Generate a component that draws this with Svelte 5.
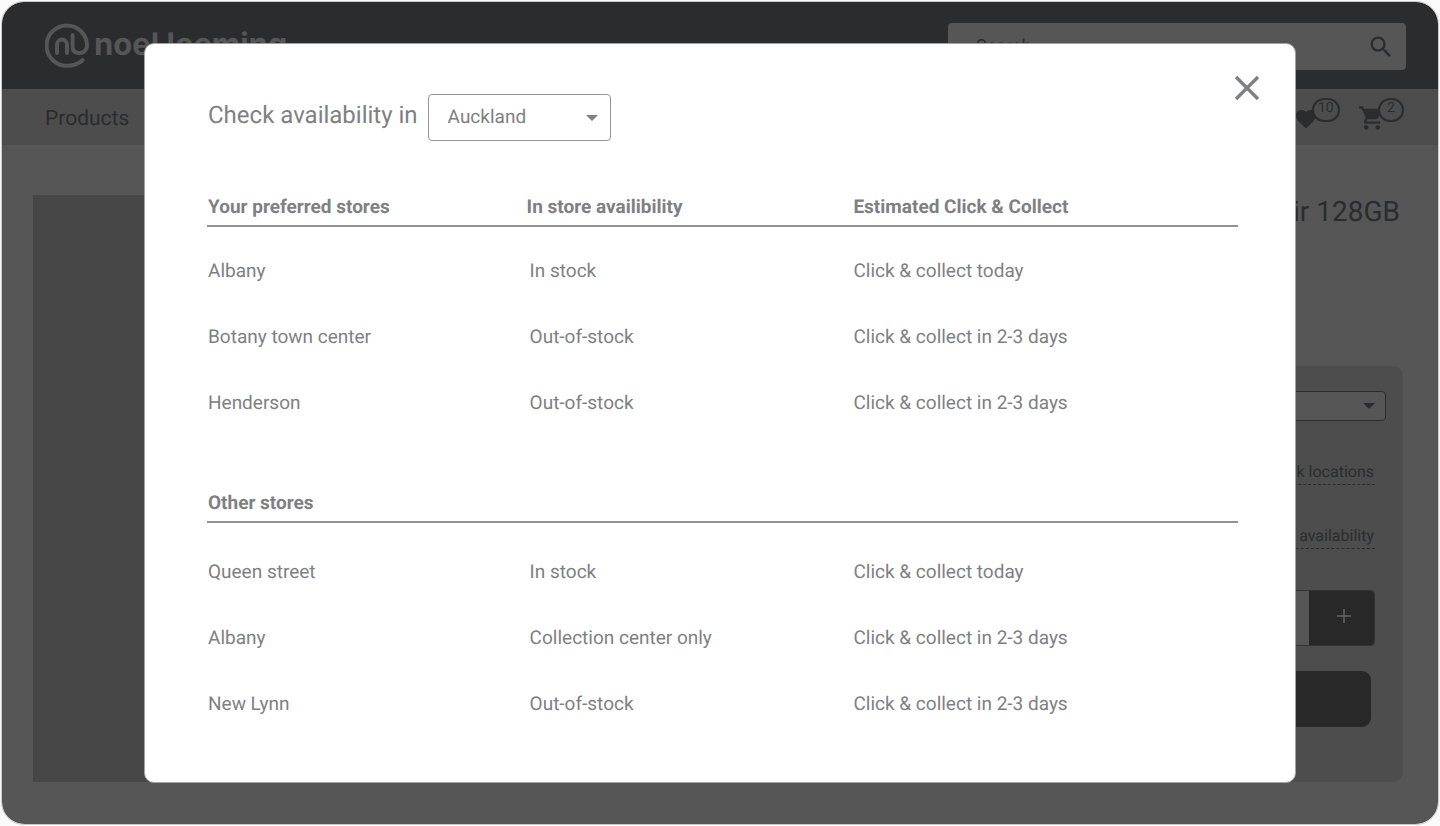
<script>
  const groups = [
    {
      headings: ['Your preferred stores', 'In store availibility', 'Estimated Click & Collect'],
      rows: [
        ['Albany', 'In stock', 'Click & collect today'],
        ['Botany town center', 'Out-of-stock', 'Click & collect in 2-3 days'],
        ['Henderson', 'Out-of-stock', 'Click & collect in 2-3 days']
      ]
    },
    {
      headings: ['Other stores', '', ''],
      rows: [
        ['Queen street', 'In stock', 'Click & collect today'],
        ['Albany', 'Collection center only', 'Click & collect in 2-3 days'],
        ['New Lynn', 'Out-of-stock', 'Click & collect in 2-3 days']
      ]
    }
  ];
  let quantity = $state(1);
  let open = $state(true);
</script>

<div class="frame">
  <header class="top">
    <a class="logo" href="#home" aria-label="noel leeming">
      <svg width="44" height="46" viewBox="0 0 44 46" fill="none" stroke="currentColor" stroke-width="4" stroke-linecap="round" stroke-linejoin="round">
        <path d="M37.5 37.2C33.5 41 28.5 42.8 22 42.8A20.2 20.2 0 1 1 42 22.5C42 27 38.5 30 34.5 30C30 30 27.6 28 27.6 24V12" />
        <path d="M12 30V21.6a5 5 0 0 1 10 0V30" />
      </svg>
      <span>noel leeming</span>
    </a>
    <label class="search">
      <input type="text" placeholder="Search" aria-label="Search" />
      <svg width="28" height="28" viewBox="0 0 24 24" fill="currentColor"><path d="M15.5 14h-.79l-.28-.27A6.47 6.47 0 0 0 16 9.5 6.5 6.5 0 1 0 9.5 16c1.61 0 3.09-.59 4.23-1.57l.27.28v.79l5 4.99L20.49 19l-4.99-5zm-6 0C7.01 14 5 11.99 5 9.5S7.01 5 9.5 5 14 7.01 14 9.5 11.99 14 9.5 14z" /></svg>
    </label>
  </header>

  <nav>
    <a href="#products">Products</a>
    <div class="shortcuts">
      <a class="shortcut wish" href="#wishlist" aria-label="Wish list">
        <svg width="24" height="24" viewBox="0 0 24 24" fill="currentColor"><path d="M12 21.35l-1.45-1.32C5.4 15.36 2 12.28 2 8.5 2 5.42 4.42 3 7.5 3c1.74 0 3.41.81 4.5 2.09C13.09 3.81 14.76 3 16.5 3 19.58 3 22 5.42 22 8.5c0 3.78-3.4 6.86-8.55 11.54L12 21.35z" /></svg>
        <span class="badge">10</span>
      </a>
      <a class="shortcut cart" href="#cart" aria-label="Cart">
        <svg width="28" height="28" viewBox="0 0 24 24" fill="currentColor"><path d="M7 18c-1.1 0-1.99.9-1.99 2S5.9 22 7 22s2-.9 2-2-.9-2-2-2zM1 2v2h2l3.6 7.59-1.35 2.45c-.16.28-.25.61-.25.96 0 1.1.9 2 2 2h12v-2H7.42c-.14 0-.25-.11-.25-.25l.03-.12.9-1.63h7.45c.75 0 1.41-.41 1.75-1.03l3.58-6.49A1 1 0 0 0 20 4H5.21l-.94-2H1zm16 16c-1.1 0-1.99.9-1.99 2s.89 2 1.99 2 2-.9 2-2-.9-2-2-2z" /></svg>
        <span class="badge">2</span>
      </a>
    </div>
  </nav>

  <main>
    <div class="photo"></div>
    <section class="product">
      <h1>Air 128GB</h1>
      <div class="buy">
        <div class="option">
          <select aria-label="Option"><option></option></select>
          <svg width="12" height="6" viewBox="0 0 12 6" fill="currentColor"><path d="M0 0h12L6 6z" /></svg>
        </div>
        <div class="actions">
          <a href="#locations">Check locations</a>
          <a href="#availability">Check availability</a>
          <div class="stepper">
            <input type="text" aria-label="Quantity" bind:value={quantity} />
            <button type="button" aria-label="Add one" onclick={() => quantity++}>
              <svg width="14" height="14" viewBox="0 0 14 14" stroke="currentColor" stroke-width="2"><path d="M7 0v14M0 7h14" /></svg>
            </button>
          </div>
          <button class="add" type="button" aria-label="Add to cart"></button>
        </div>
      </div>
    </section>
  </main>

  {#if open}
    <div class="modal" role="dialog" aria-modal="true" aria-labelledby="region-label">
      <div class="modal-head">
        <div class="region">
          <label id="region-label" for="region">Check availability in</label>
          <div class="region-select">
            <select id="region"><option>Auckland</option></select>
            <svg width="12" height="6" viewBox="0 0 12 6" fill="currentColor"><path d="M0 0h12L6 6z" /></svg>
          </div>
        </div>
        <button class="close" type="button" aria-label="Close" onclick={() => (open = false)}>
          <svg width="26" height="26" viewBox="0 0 26 26" stroke="currentColor" stroke-width="3.4"><path d="M2 2l22 22M24 2L2 24" /></svg>
        </button>
      </div>
      <div class="modal-body">
        {#each groups as group}
          <table>
            <thead>
              <tr>
                {#each group.headings as heading}
                  <th scope="col">{heading}</th>
                {/each}
              </tr>
            </thead>
            <tbody>
              {#each group.rows as row}
                <tr>
                  {#each row as cell}
                    <td>{cell}</td>
                  {/each}
                </tr>
              {/each}
            </tbody>
          </table>
        {/each}
      </div>
    </div>
  {/if}
</div>

<style>
  :global(body) {
    background: #fafafa;
    font-family: Roboto, sans-serif;
    text-rendering: geometricPrecision;
  }
  :global(#app) {
    display: flow-root;
  }
  * {
    box-sizing: border-box;
  }
  svg {
    display: block;
    flex: none;
  }
  a {
    color: inherit;
    text-decoration: none;
  }
  button,
  input,
  select {
    margin: 0;
    padding: 0;
    border: 0;
    color: inherit;
    font: inherit;
    text-rendering: inherit;
    background: none;
    appearance: none;
  }
  .frame {
    position: relative;
    margin: 2px;
    border-radius: 22px;
    overflow: hidden;
    color: #2b2c2e;
    background: #565656;
    outline: 1px solid #c8cbcd;
  }
  .top {
    display: flex;
    align-items: center;
    justify-content: space-between;
    height: 87px;
    padding: 2px 32px 0 43px;
    background: #2b2c2e;
  }
  .logo {
    display: flex;
    align-items: center;
    gap: 5px;
    padding-bottom: 2px;
    color: #565656;
    font: 700 31px/36px Inter, sans-serif;
  }
  .logo span {
    padding-bottom: 2px;
  }
  .search {
    display: flex;
    flex: 0 1 458px;
    align-items: center;
    height: 47px;
    padding: 0 11px 0 28px;
    border-radius: 4px;
    background: #565656;
  }
  .search input {
    flex: 1;
    min-width: 0;
    font-size: 18px;
  }
  .search input::placeholder {
    color: #2b2c2e;
  }
  nav {
    display: flex;
    align-items: center;
    justify-content: space-between;
    height: 56px;
    padding: 3px 52px 0 43px;
    font-size: 21px;
    background: #4d4d4d;
  }
  .shortcuts {
    display: flex;
    align-items: center;
    gap: 40px;
  }
  .shortcut {
    position: relative;
  }
  .cart {
    padding-bottom: 2px;
  }
  .badge {
    position: absolute;
    top: -9px;
    left: 18px;
    min-width: 26px;
    height: 24px;
    padding: 0 4px;
    border: 2px solid;
    border-radius: 12px;
    font-size: 14px;
    line-height: 17px;
    text-align: center;
    background: #4d4d4d;
  }
  .cart .badge {
    top: -6px;
    left: 20px;
  }
  main {
    display: grid;
    grid-template-columns: 3fr 2fr;
    gap: 40px;
    padding: 50px 35px 42px 31px;
  }
  .photo {
    background: #464646;
  }
  h1 {
    margin: 0 3px 137px 0;
    font-size: 28px;
    font-weight: 400;
    line-height: 34px;
    text-align: right;
  }
  .buy {
    padding: 25px 17px 55px;
    border-radius: 10px;
    background: #4d4d4d;
  }
  .option {
    display: flex;
    align-items: center;
    height: 30px;
    padding-right: 10px;
    border: 1px solid;
    border-radius: 4px;
    background: #565656;
  }
  .option select {
    flex: 1;
  }
  .actions {
    display: flex;
    flex-direction: column;
    align-items: flex-end;
    gap: 41px;
    padding: 41px 11px 0 0;
  }
  .actions a {
    padding: 0 1px 2px;
    border-bottom: 1px dashed;
    font-size: 16px;
    line-height: 20px;
  }
  .stepper {
    display: flex;
    width: 240px;
    height: 56px;
    border: 1px solid #333333;
    border-radius: 4px;
    background: #565656;
    overflow: hidden;
  }
  .stepper input {
    flex: 1;
    min-width: 0;
    text-align: center;
  }
  .stepper button {
    display: grid;
    place-items: center;
    width: 65px;
    padding: 0 0 4px 4px;
    color: #565656;
    background: #282828;
  }
  .add {
    width: 240px;
    height: 56px;
    margin: -16px 4px 0 0;
    border-radius: 9px;
    background: #282828;
  }
  .modal {
    position: absolute;
    top: 41px;
    left: 142px;
    right: 142px;
    padding-bottom: 45px;
    border: 1px solid #a3a3a3;
    border-radius: 10px;
    color: #7f8083;
    background: #ffffff;
  }
  .modal-head {
    display: flex;
    align-items: flex-start;
    justify-content: space-between;
    padding: 31px 35px 0 63px;
  }
  .region {
    display: flex;
    align-items: center;
    gap: 10px;
    padding-top: 19px;
    font-size: 24px;
  }
  .region label {
    padding-bottom: 5px;
  }
  .region-select {
    display: flex;
    align-items: center;
    width: 183px;
    height: 47px;
    padding-right: 12px;
    border: 1px solid #96979a;
    border-radius: 4px;
    font-size: 19px;
  }
  .region-select select {
    flex: 1;
    min-width: 0;
    padding: 0 0 2px 19px;
  }
  .close {
    display: block;
  }
  .modal-body {
    padding: 50px 57px 0 62px;
  }
  table {
    width: 100%;
    border-collapse: collapse;
    table-layout: fixed;
    font-size: 19px;
    line-height: 24px;
    text-align: left;
  }
  th {
    padding: 4px 0 6px;
    border-bottom: 2px solid #929292;
    font-weight: 700;
  }
  th:nth-child(1) {
    width: 31%;
  }
  th:nth-child(2) {
    width: 31.7%;
  }
  td {
    padding: 21px 0;
  }
  th:first-child,
  td:first-child {
    padding-left: 1px;
  }
  td:nth-child(2) {
    padding-left: 3px;
  }
  tbody tr:first-child td {
    padding-top: 32px;
  }
  table + table {
    margin-top: 51px;
  }
  table + table tbody tr:first-child td {
    padding-top: 37px;
  }
</style>
